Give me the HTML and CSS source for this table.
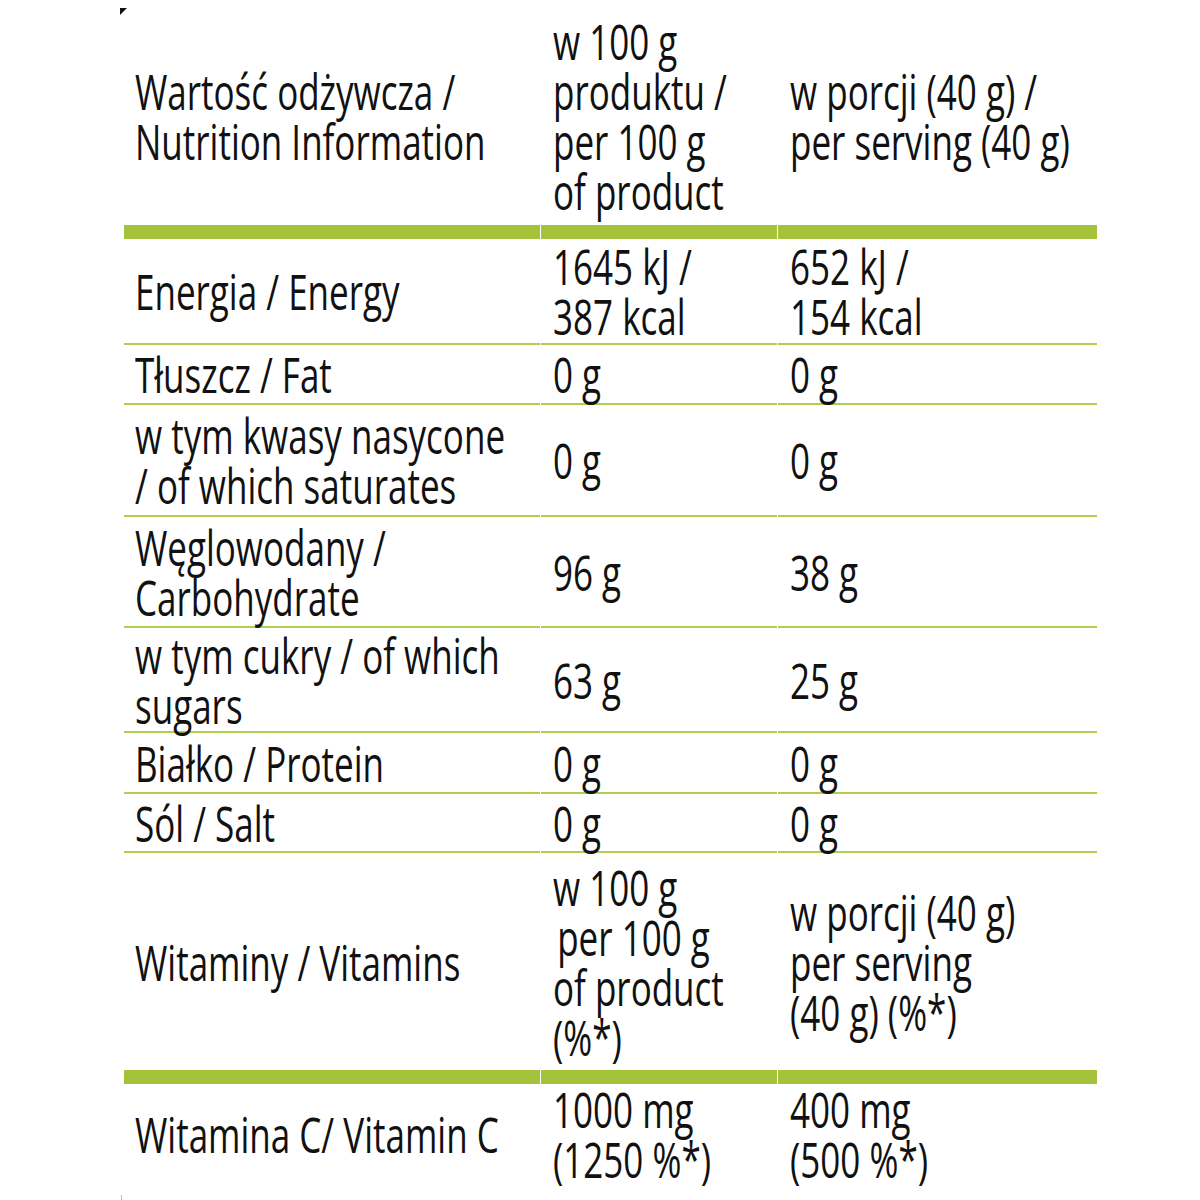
FILE: index.html
```html
<!DOCTYPE html>
<html lang="pl">
<head>
<meta charset="utf-8">
<title>Wartość odżywcza / Nutrition Information</title>
<link rel="stylesheet" href="styles.css">
</head>
<body>
<div class="page">
  <span class="corner-mark"></span>
  <span class="bottom-tick"></span>
  <table class="nutrition">
    <colgroup>
      <col class="c1"><col class="c2"><col class="c3">
    </colgroup>
    <tbody>
      <tr class="r-head thick">
        <td class="label"><span class="t">Wartość odżywcza /<br>Nutrition Information</span></td>
        <td><span class="t">w 100 g<br>produktu /<br>per 100 g<br>of product</span></td>
        <td><span class="t">w porcji (40 g) /<br>per serving (40 g)</span></td>
      </tr>
      <tr class="r-energy">
        <td class="label"><span class="t">Energia / Energy</span></td>
        <td><span class="t">1645 kJ /<br>387 kcal</span></td>
        <td><span class="t">652 kJ /<br>154 kcal</span></td>
      </tr>
      <tr class="r-fat">
        <td class="label"><span class="t">Tłuszcz / Fat</span></td>
        <td><span class="t">0 g</span></td>
        <td><span class="t">0 g</span></td>
      </tr>
      <tr class="r-sat">
        <td class="label"><span class="t">w tym kwasy nasycone<br>/ of which saturates</span></td>
        <td><span class="t">0 g</span></td>
        <td><span class="t">0 g</span></td>
      </tr>
      <tr class="r-carb">
        <td class="label"><span class="t">Węglowodany /<br>Carbohydrate</span></td>
        <td><span class="t">96 g</span></td>
        <td><span class="t">38 g</span></td>
      </tr>
      <tr class="r-sugar">
        <td class="label"><span class="t">w tym cukry / of which<br>sugars</span></td>
        <td><span class="t">63 g</span></td>
        <td><span class="t">25 g</span></td>
      </tr>
      <tr class="r-protein">
        <td class="label"><span class="t">Białko / Protein</span></td>
        <td><span class="t">0 g</span></td>
        <td><span class="t">0 g</span></td>
      </tr>
      <tr class="r-salt">
        <td class="label"><span class="t">Sól / Salt</span></td>
        <td><span class="t">0 g</span></td>
        <td><span class="t">0 g</span></td>
      </tr>
      <tr class="r-vit thick">
        <td class="label"><span class="t">Witaminy / Vitamins</span></td>
        <td><span class="t">w 100 g<br><span class="indent">per 100 g</span><br>of product<br>(%*)</span></td>
        <td><span class="t">w porcji (40 g)<br>per serving<br>(40 g) (%*)</span></td>
      </tr>
      <tr class="r-vitc last">
        <td class="label"><span class="t">Witamina C/ Vitamin C</span></td>
        <td><span class="t">1000 mg<br>(1250 %*)</span></td>
        <td><span class="t">400 mg<br>(500 %*)</span></td>
      </tr>
    </tbody>
  </table>
</div>
</body>
</html>
```

FILE: styles.css
```css
html, body {
  margin: 0;
  padding: 0;
  background: #ffffff;
}

.page {
  position: relative;
  width: 1200px;
  height: 1200px;
  overflow: hidden;
}

.corner-mark {
  position: absolute;
  left: 120px;
  top: 8px;
  width: 0;
  height: 0;
  border-top: 7px solid #111;
  border-right: 7px solid transparent;
}

.bottom-tick {
  position: absolute;
  left: 121px;
  top: 1195px;
  width: 1px;
  height: 5px;
  background: #bbb;
}

.nutrition {
  margin-left: 123px;
  width: 973px;
  border-collapse: separate;
  border-spacing: 1px 0;
  table-layout: fixed;
  font-family: "Open Sans", "Noto Sans", sans-serif;
  font-size: 50px;
  line-height: 50px;
  color: #111;
}

.c1 { width: 416px; }
.c2 { width: 236px; }
.c3 { width: 319px; }

.nutrition td {
  padding: 0 0 0 12px;
  vertical-align: middle;
  border-bottom: 2px solid #afcf4e;
  white-space: nowrap;
  overflow: visible;
}

.nutrition td.label {
  padding-left: 11px;
}

.t {
  display: block;
  transform: scaleX(0.70);
  transform-origin: 0 50%;
}

.nutrition tr.thick td {
  border-bottom: 14px solid #a5c33a;
}

.nutrition tr.last td {
  border-bottom: none;
}

.indent {
  padding-left: 6px;
}

.r-head td { height: 219px; padding-top: 6px; }
.r-energy td { height: 104px; }
.r-fat td { height: 58px; }
.r-sat td { height: 110px; }
.r-carb td { height: 109px; }
.r-sugar td { height: 103px; }
.r-protein td { height: 59px; }
.r-salt td { height: 57px; }
.r-vit td { height: 217px; }
.r-vitc td { height: 98px; }
```
